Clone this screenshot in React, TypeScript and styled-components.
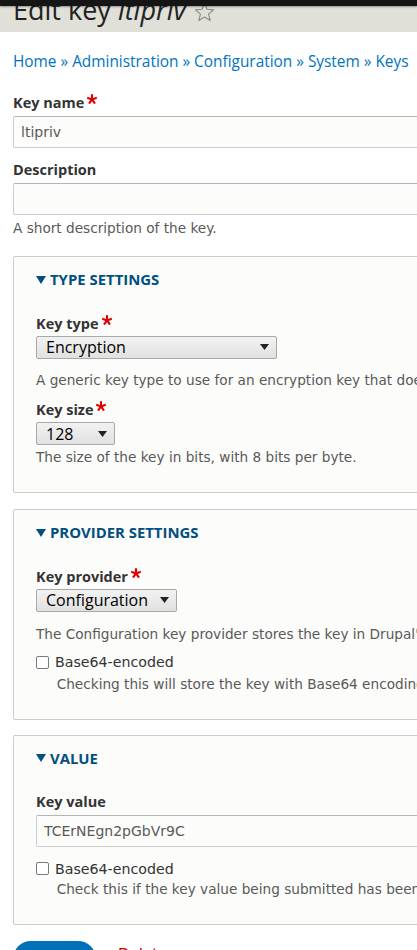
import React from "react";
import styled, { createGlobalStyle } from "styled-components";

const GlobalStyle = createGlobalStyle`
  html, body {
    margin: 0;
    padding: 0;
    background: #ffffff;
    overflow: hidden;
  }
  body {
    font-family: "DejaVu Sans", "Liberation Sans", sans-serif;
    color: #333333;
  }
  * { box-sizing: border-box; }
`;

const Toolbar = styled.div`
  position: fixed;
  top: 0;
  left: 0;
  right: 0;
  height: 6px;
  background: #151515;
  box-shadow: 0 1px 2px rgba(0, 0, 0, 0.35);
  z-index: 10;
`;

const Page = styled.div`
  width: 1100px;
`;

const Header = styled.header`
  height: 32px;
  background: #e0e0d8;
  padding: 0 13px;
  overflow: hidden;
  display: flex;
  align-items: flex-start;
`;

const Title = styled.h1`
  margin: -6px 0 0;
  font-family: "Open Sans", sans-serif;
  font-weight: 400;
  font-size: 27px;
  line-height: 32px;
  color: #222222;
  display: flex;
  align-items: center;
  gap: 8px;
  white-space: nowrap;
`;

const TitleEm = styled.em`
  font-style: italic;
`;

const Content = styled.main`
  padding: 20px 13px 0;
`;

const Breadcrumb = styled.nav`
  font-family: "Open Sans", sans-serif;
  font-size: 15.4px;
  line-height: 20px;
  color: #0074bd;
  white-space: nowrap;
  margin-bottom: 20.7px;
`;

const Crumb = styled.a`
  color: #0074bd;
  text-decoration: none;
`;

const Sep = styled.span`
  color: #0074bd;
`;

const Item = styled.div<{ $mt?: number }>`
  margin-top: ${(p) => p.$mt ?? 0}px;
  display: flex;
  flex-direction: column;
  align-items: flex-start;
`;

const Label = styled.label`
  font-family: "Open Sans", sans-serif;
  font-weight: 700;
  font-size: 14.5px;
  line-height: 20px;
  color: #333333;
  margin-bottom: 2px;
  display: flex;
  align-items: flex-start;
  gap: 3px;
  white-space: nowrap;
`;

const Required = styled.svg`
  width: 10px;
  height: 10px;
  margin-top: 1px;
`;

const TextInput = styled.input`
  margin-top: 1px;
  width: 900px;
  height: 32px;
  border: 1px solid #cccccc;
  border-top-color: #b4b4b4;
  border-radius: 2px;
  background: #fcfcfa;
  padding: 0 7px;
  font-family: "DejaVu Sans", sans-serif;
  font-size: 14px;
  color: #595959;
  outline: none;
`;

const Description = styled.div<{ $mt?: number; $indent?: number }>`
  margin-top: ${(p) => p.$mt ?? 0}px;
  padding-left: ${(p) => p.$indent ?? 0}px;
  font-family: "DejaVu Sans", sans-serif;
  font-size: 13.65px;
  line-height: 18px;
  color: #595959;
  white-space: nowrap;
`;

const Panel = styled.section<{ $mt: number }>`
  margin-top: ${(p) => p.$mt}px;
  width: 1000px;
  border: 1px solid #cccccc;
  border-radius: 2px;
  background: #fcfcfa;
  padding: 13px 22px 26px;
`;

const Legend = styled.div`
  display: flex;
  align-items: center;
  gap: 4px;
  font-family: "Open Sans", sans-serif;
  font-weight: 700;
  font-size: 14.9px;
  line-height: 18px;
  text-transform: uppercase;
  color: #004f80;
  margin-bottom: 25.9px;
`;

const Triangle = styled.svg`
  width: 10px;
  height: 8px;
  margin-top: 1px;
`;

const SelectBox = styled.div<{ $w: number }>`
  width: ${(p) => p.$w}px;
  height: 23px;
  border: 1px solid #a9a9a9;
  border-radius: 2px;
  background: linear-gradient(#f2f2f2, #e1e1e1);
  display: flex;
  align-items: center;
  justify-content: space-between;
  padding: 0 7px 0 9px;
  font-family: "Open Sans", sans-serif;
  font-size: 16px;
  line-height: 20px;
  color: #000000;
`;

const Arrow = styled.svg`
  width: 9px;
  height: 6px;
  flex: none;
`;

const CheckRow = styled.div<{ $mt: number }>`
  margin-top: ${(p) => p.$mt}px;
  display: flex;
  align-items: center;
  gap: 6px;
  font-family: "DejaVu Sans", sans-serif;
  font-size: 14.2px;
  line-height: 20px;
  color: #333333;
`;

const Check = styled.input`
  appearance: none;
  margin: 0;
  width: 13px;
  height: 13px;
  border: 1px solid #7a7a7a;
  border-radius: 2px;
  background: #ffffff;
  flex: none;
`;

const Actions = styled.div`
  margin-top: 16px;
  display: flex;
  align-items: flex-start;
  gap: 22px;
`;

const SaveButton = styled.button`
  width: 83px;
  height: 36px;
  border: none;
  border-radius: 20px;
  background: #0071b8;
  color: #ffffff;
  font-family: "Open Sans", sans-serif;
  font-weight: 600;
  font-size: 15px;
  padding: 0;
`;

const DeleteLink = styled.a`
  margin-top: 5px;
  font-family: "DejaVu Sans", sans-serif;
  font-size: 15px;
  color: #cc0000;
  text-decoration: none;
`;

const Asterisk = () => (
  <Required viewBox="0 0 10 10" aria-hidden="true">
    <g stroke="#e00000" strokeWidth="2.1" strokeLinecap="butt">
      <line x1="5" y1="5.4" x2="5" y2="0.2" />
      <line x1="5" y1="5.4" x2="9.8" y2="3.8" />
      <line x1="5" y1="5.4" x2="0.2" y2="3.8" />
      <line x1="5" y1="5.4" x2="8" y2="9.6" />
      <line x1="5" y1="5.4" x2="2" y2="9.6" />
    </g>
  </Required>
);

const Star = () => (
  <svg width="21" height="20" viewBox="0 0 24 23" aria-hidden="true" style={{ marginTop: 4 }}>
    <polygon
      points="12,1.5 14.9,8.4 22.4,9 16.7,13.9 18.5,21.2 12,17.3 5.5,21.2 7.3,13.9 1.6,9 9.1,8.4"
      fill="none"
      stroke="#8a8a8a"
      strokeWidth="1.3"
      strokeLinejoin="round"
    />
  </svg>
);

const LegendTitle = ({ children }: { children: React.ReactNode }) => (
  <Legend>
    <Triangle viewBox="0 0 10 8" aria-hidden="true">
      <polygon points="0,0 10,0 5,8" fill="#004f80" />
    </Triangle>
    {children}
  </Legend>
);

const Select = ({ value, width }: { value: string; width: number }) => (
  <SelectBox $w={width}>
    <span>{value}</span>
    <Arrow viewBox="0 0 9 6" aria-hidden="true">
      <polygon points="0,0 9,0 4.5,6" fill="#222222" />
    </Arrow>
  </SelectBox>
);

export default function App() {
  const crumbs = ["Home", "Administration", "Configuration", "System", "Keys"];
  return (
    <>
      <GlobalStyle />
      <Toolbar />
      <Page>
        <Header>
          <Title>
            <span>
              Edit key <TitleEm>ltipriv</TitleEm>
            </span>
            <Star />
          </Title>
        </Header>
        <Content>
          <Breadcrumb>
            {crumbs.map((c, i) => (
              <React.Fragment key={c}>
                {i > 0 && <Sep> » </Sep>}
                <Crumb href="#">{c}</Crumb>
              </React.Fragment>
            ))}
          </Breadcrumb>

          <Item>
            <Label>
              Key name
              <Asterisk />
            </Label>
            <TextInput readOnly value="ltipriv" />
          </Item>

          <Item $mt={12.4}>
            <Label>Description</Label>
            <TextInput readOnly value="" />
            <Description $mt={4.3}>A short description of the key.</Description>
          </Item>

          <Panel $mt={18.7}>
            <LegendTitle>Type settings</LegendTitle>
            <Item>
              <Label>
                Key type
                <Asterisk />
              </Label>
              <Select value="Encryption" width={241} />
            </Item>
            <Description $mt={12.3}>
              A generic key type to use for an encryption key that does not belong to any other defined key type.
            </Description>
            <Item $mt={10.8}>
              <Label>
                Key size
                <Asterisk />
              </Label>
              <Select value="128" width={79} />
              <Description $mt={3}>The size of the key in bits, with 8 bits per byte.</Description>
            </Item>
          </Panel>

          <Panel $mt={16}>
            <LegendTitle>Provider settings</LegendTitle>
            <Item>
              <Label>
                Key provider
                <Asterisk />
              </Label>
              <Select value="Configuration" width={141} />
            </Item>
            <Description $mt={12.6}>
              The Configuration key provider stores the key in Drupal's configuration system.
            </Description>
            <CheckRow $mt={9.6}>
              <Check type="checkbox" readOnly />
              <span>Base64-encoded</span>
            </CheckRow>
            <Description $mt={2.4} $indent={20.7}>
              Checking this will store the key with Base64 encoding.
            </Description>
          </Panel>

          <Panel $mt={15}>
            <LegendTitle>Value</LegendTitle>
            <Item>
              <Label>Key value</Label>
              <TextInput readOnly value="TCErNEgn2pGbVr9C" />
            </Item>
            <CheckRow $mt={11.2}>
              <Check type="checkbox" readOnly />
              <span>Base64-encoded</span>
            </CheckRow>
            <Description $mt={1.5} $indent={20.7}>
              Check this if the key value being submitted has been Base64-encoded.
            </Description>
          </Panel>

          <Actions>
            <SaveButton type="button">Save</SaveButton>
            <DeleteLink href="#">Delete</DeleteLink>
          </Actions>
        </Content>
      </Page>
    </>
  );
}
